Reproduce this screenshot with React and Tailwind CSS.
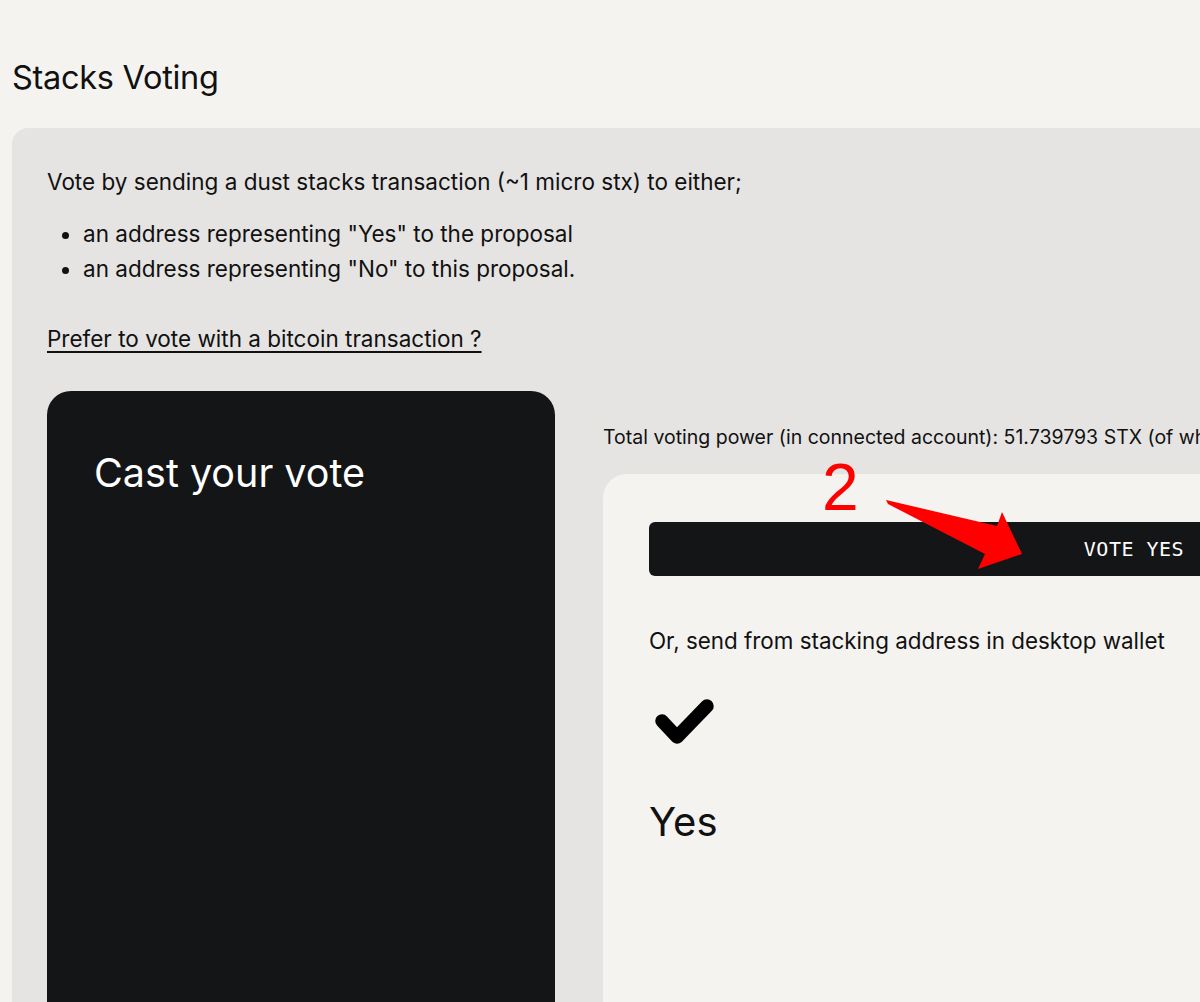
import React from 'react';

// Stacks voting page: intro panel, dark "cast your vote" card and the
// vote option card, with the red "2" annotation laid over the top.
function CheckMark() {
  return (
    <svg width="70" height="60" viewBox="0 0 70 60" className="block">
      <polyline
        points="13,28 28,44 58,13"
        fill="none"
        stroke="#000"
        strokeWidth="13.5"
        strokeLinecap="round"
        strokeLinejoin="round"
      />
    </svg>
  );
}

function Annotation() {
  return (
    <svg
      className="absolute left-0 top-0 pointer-events-none"
      width="1200"
      height="1002"
      viewBox="0 0 1200 1002"
    >
      <text
        x="822"
        y="510"
        fill="#ff0000"
        fontSize="66"
        fontFamily="'Liberation Sans', Arial, sans-serif"
      >
        2
      </text>
      <polygon
        points="886,500 997,526 1002,512 1022,554 978,569 985,554 888,504"
        fill="#ff0000"
      />
    </svg>
  );
}

export default function App() {
  return (
    <div
      className="relative w-[1200px] h-[1002px] overflow-hidden bg-[#f4f3f0] text-[#111]"
      style={{ fontFamily: "Inter, 'Noto Sans', sans-serif" }}
    >
      <h1 className="pl-[12px] pt-[58px] text-[32.5px] leading-[40px] font-normal tracking-[-0.3px]">
        Stacks Voting
      </h1>

      <div className="mt-[30px] ml-[12px] w-[1700px] rounded-2xl bg-[#e5e4e2] pl-[35px] pt-[36px] pb-10">
        <p className="text-[22.5px] leading-[35px]">
          Vote by sending a dust stacks transaction (~1 micro stx) to either;
        </p>
        <ul className="mt-[17px] list-disc pl-[36px] text-[22.5px] leading-[35px]">
          <li>an address representing "Yes" to the proposal</li>
          <li>an address representing "No" to this proposal.</li>
        </ul>
        <a href="#" className="mt-[35px] block w-fit text-[22.5px] leading-[35px] underline underline-offset-4">
          Prefer to vote with a bitcoin transaction ?
        </a>

        <div className="mt-[35px] flex gap-[48px]">
          <div className="w-[508px] h-[700px] shrink-0 rounded-3xl bg-[#141517] pl-[47px] pt-[58px]">
            <h2 className="text-[39.5px] leading-[48px] text-white font-normal">Cast your vote</h2>
          </div>

          <div className="pt-[32px]">
            <p className="text-[19.5px] leading-[28px] whitespace-nowrap">
              Total voting power (in connected account): 51.739793 STX (of which 51.739793 STX is stacked)
            </p>
            <div className="mt-[23px] w-[1062px] h-[600px] rounded-3xl bg-[#f4f3f0] px-[46px] pt-[48px]">
              <button
                type="button"
                className="w-full h-[54px] rounded-md bg-[#141517] text-white text-[20px] tracking-[0.5px]"
                style={{ fontFamily: "'DejaVu Sans Mono', 'Liberation Mono', monospace" }}
              >
                VOTE YES
              </button>
              <p className="mt-[47px] text-[22.4px] leading-[35px]">
                Or, send from stacking address in desktop wallet
              </p>
              <div className="mt-[35px]">
                <CheckMark />
              </div>
              <p className="mt-[45px] text-[40px] leading-[48px]">Yes</p>
            </div>
          </div>
        </div>
      </div>

      <Annotation />
    </div>
  );
}
